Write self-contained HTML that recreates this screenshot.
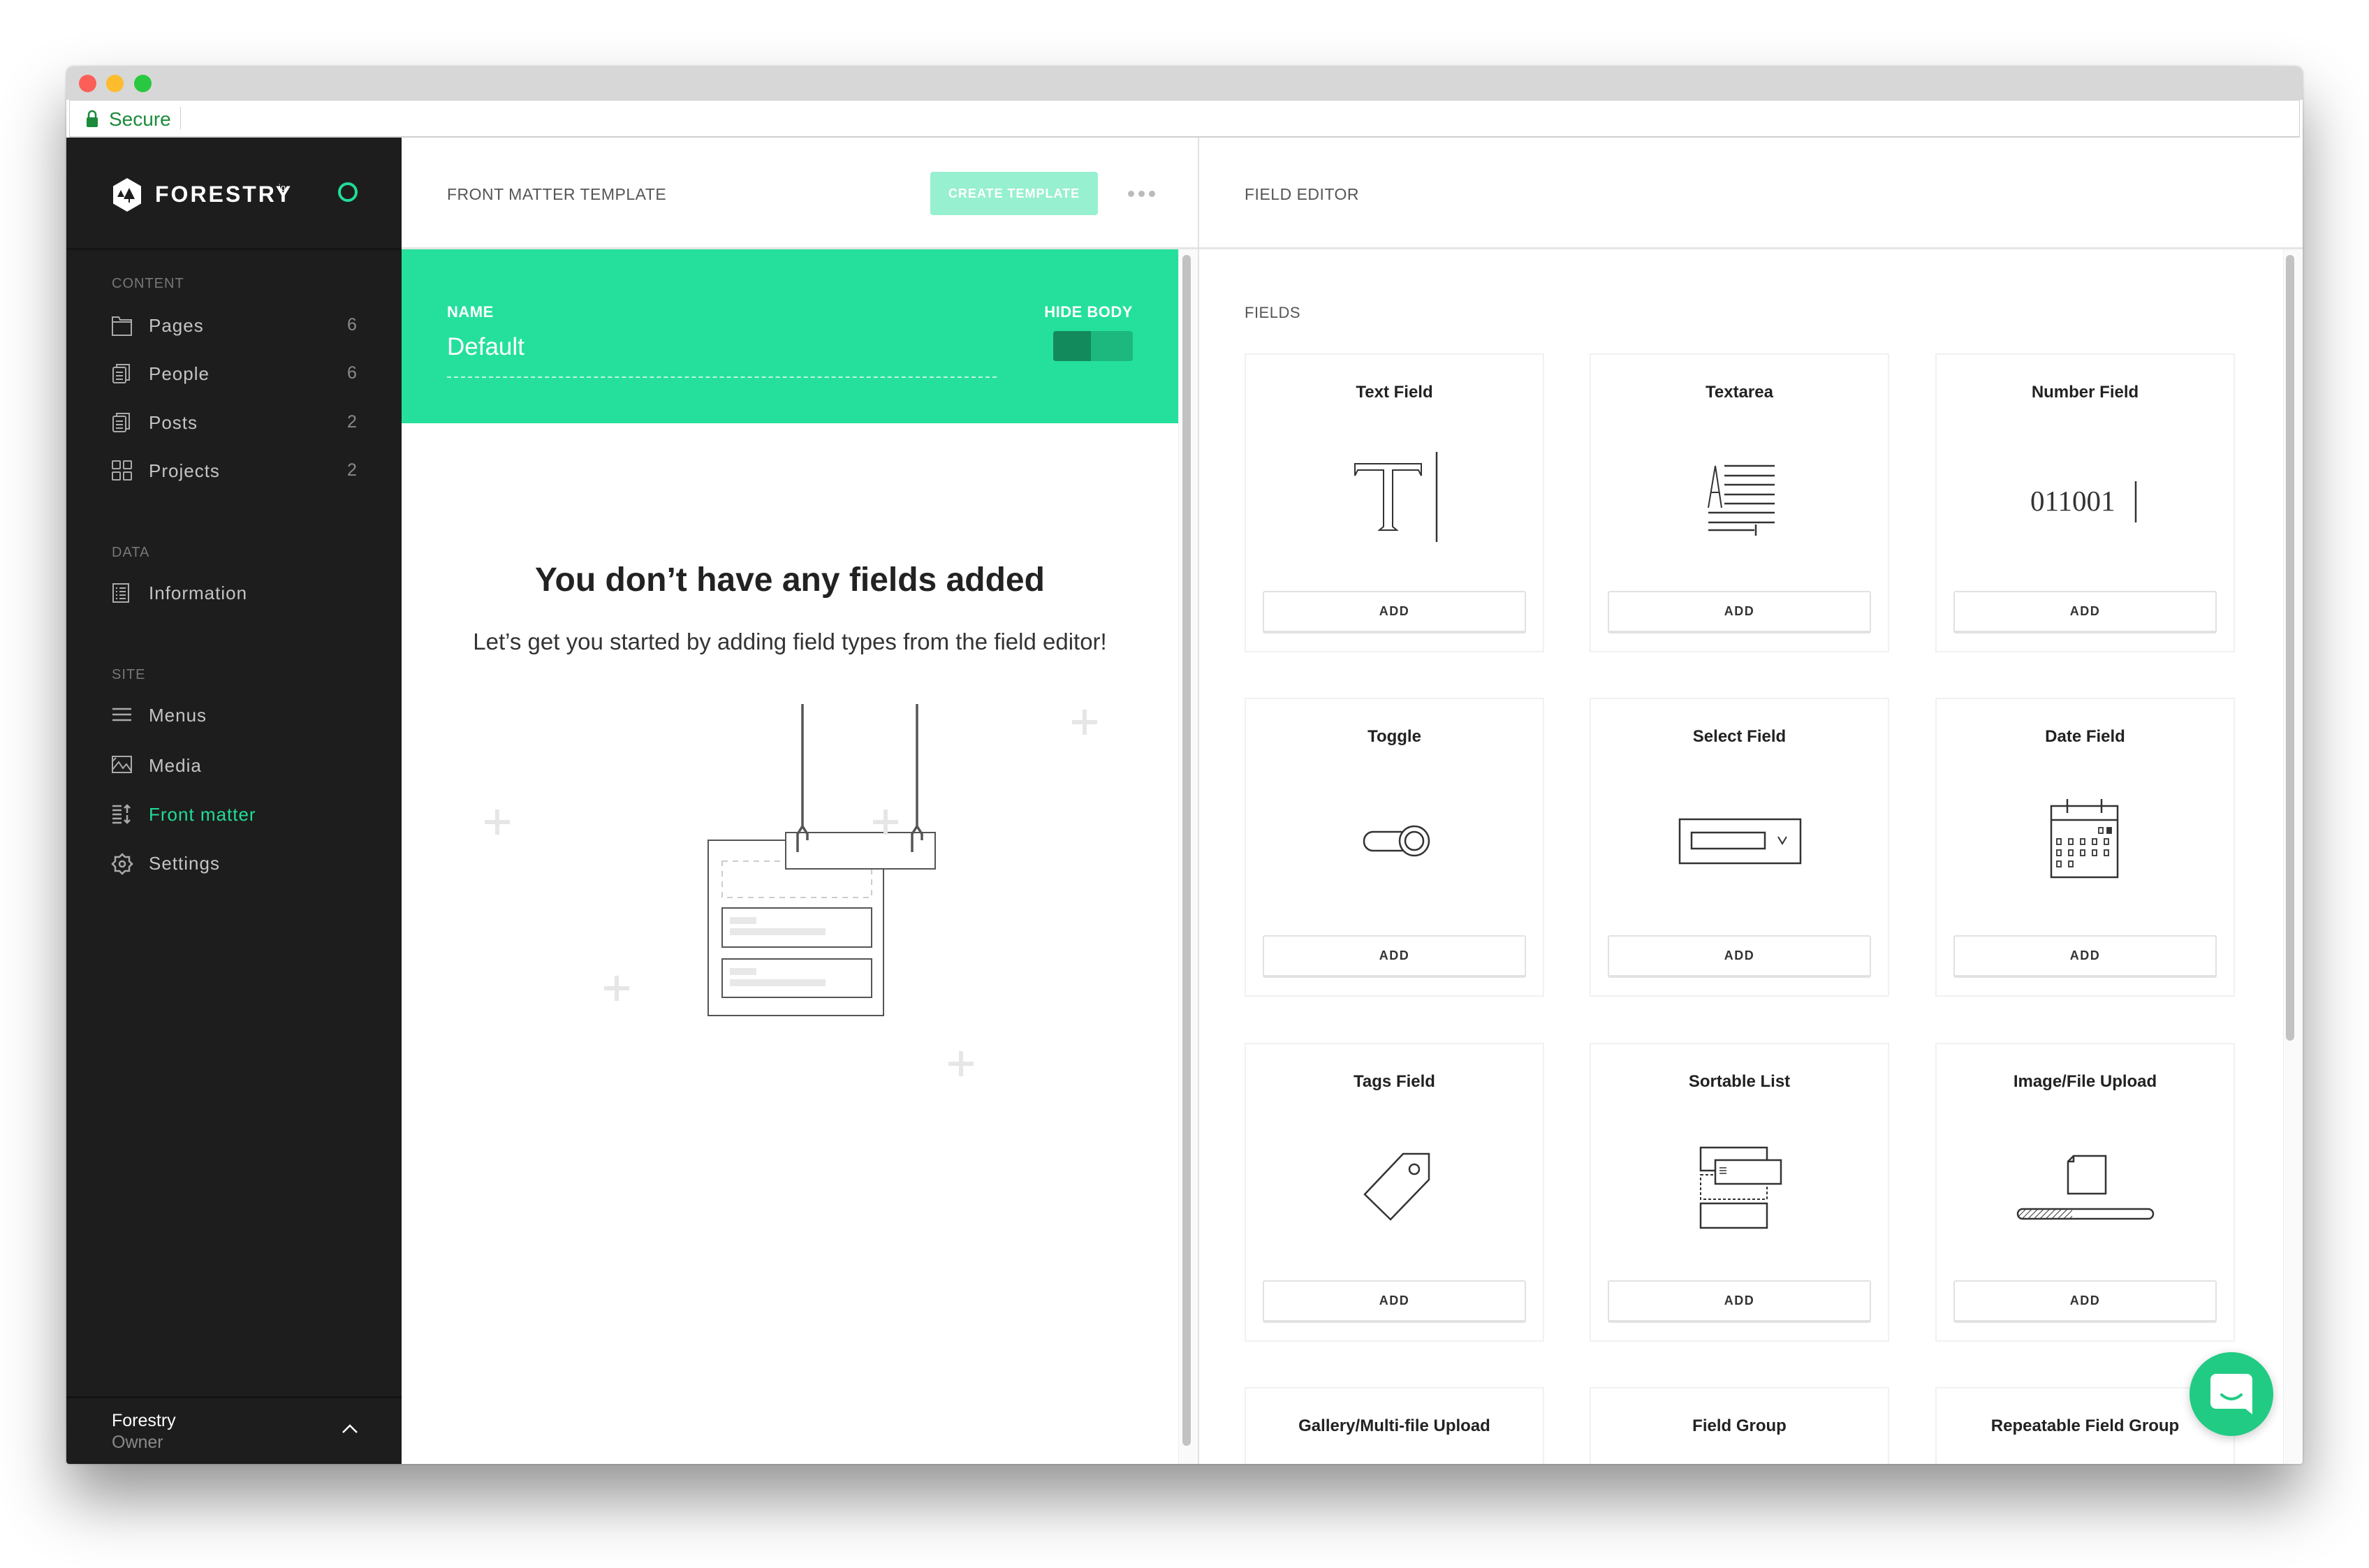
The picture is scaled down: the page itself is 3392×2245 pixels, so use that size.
<!DOCTYPE html>
<html><head><meta charset="utf-8">
<style>
*{margin:0;padding:0;box-sizing:border-box}
html,body{width:3392px;height:2245px;overflow:hidden}
body{background:#fff;position:relative;font-family:"Liberation Sans",sans-serif}
.a{position:absolute}
#win{left:95px;top:95px;width:3202px;height:2001px;background:#fff;box-shadow:0 50px 90px rgba(0,0,0,.42),0 0 3px rgba(0,0,0,.25);border-radius:10px 10px 4px 4px;overflow:hidden}
.side{color:#c4c4c4;font-size:26px;letter-spacing:1px}
.sec{color:#777;font-size:20px;letter-spacing:1px}
.cnt{color:#8a8a8a;font-size:25px}
.card{position:absolute;width:429px;height:428px;border:2px solid #f1f1f1;background:#fff}
.card .t{position:absolute;left:0;right:0;top:40px;text-align:center;font-size:24px;font-weight:bold;color:#222}
.card .b{position:absolute;left:24px;top:338px;width:377px;height:61px;border:2px solid #e2e2e2;border-bottom-width:4px;border-radius:3px;text-align:center;line-height:55px;font-size:18px;font-weight:bold;letter-spacing:1.5px;color:#333}
.card svg{position:absolute;left:84px;top:101px}
.plus{position:absolute;width:36px;height:36px}
.plus:before,.plus:after{content:"";position:absolute;background:#e6e6e6}
.plus:before{left:15px;top:0;width:6px;height:36px}
.plus:after{top:15px;left:0;height:6px;width:36px}
</style></head><body>
<div id="win" class="a">
 <div class="a" style="left:0;top:0;width:3202px;height:48px;background:#d7d7d7"></div>
 <div class="a" style="left:18px;top:12px;width:25px;height:25px;border-radius:50%;background:#fc5f57"></div>
 <div class="a" style="left:57px;top:12px;width:25px;height:25px;border-radius:50%;background:#fdbc2e"></div>
 <div class="a" style="left:97px;top:12px;width:25px;height:25px;border-radius:50%;background:#28c840"></div>
 <div class="a" style="left:4px;top:48px;width:3194px;height:54px;background:#fff;border:1px solid #cfcfcf;border-bottom:2px solid #cfcfcf"></div>
 <svg class="a" style="left:28px;top:62px" width="18" height="26"><path d="M4 11V7a5 5 0 0 1 10 0v4" fill="none" stroke="#1b8a3a" stroke-width="2.5"/><rect x="1" y="11" width="16" height="14" rx="2" fill="#1b8a3a"/></svg>
 <div class="a" style="left:61px;top:60px;font-size:28px;color:#1b8a3a">Secure</div>
 <div class="a" style="left:163px;top:58px;width:1px;height:32px;background:#ccc"></div>

 <div class="a" style="left:0;top:102px;width:480px;height:1899px;background:#1d1d1d"></div>
 <div class="a" style="left:0;top:260px;width:480px;height:3px;background:#151515"></div>
 <svg class="a" style="left:65px;top:159px" width="44" height="50" viewBox="0 0 44 50"><path d="M22 1 L42 12.5 V37.5 L22 49 L2 37.5 V12.5Z" fill="#fff"/><path d="M13 18 L8 28 H18Z M25 15 L17 31 H33Z" fill="#1d1d1d"/><rect x="24" y="30" width="2" height="6" fill="#1d1d1d"/></svg>
 <div class="a" style="left:127px;top:165px;font-size:32px;font-weight:bold;color:#fff;letter-spacing:3px">FORESTRY</div>
 <div class="a" style="left:304px;top:166px;font-size:13px;color:#fff">io</div>
 <div class="a" style="left:389px;top:166px;width:28px;height:28px;border-radius:50%;border:4px solid #22dc97"></div>

 <div class="a sec" style="left:65px;top:300px">CONTENT</div>
 <svg class="a" style="left:65px;top:357px" width="30" height="30" fill="none" stroke="#aaa" stroke-width="2"><path d="M1 2H10L12 6H28V28H1Z M1 9H28"/></svg>
 <div class="a side" style="left:118px;top:356px">Pages</div><div class="a cnt" style="left:402px;top:356px">6</div>
 <svg class="a" style="left:66px;top:425px" width="28" height="30" fill="none" stroke="#aaa" stroke-width="2"><rect x="1" y="6" width="18" height="22" rx="2"/><path d="M6 6V2H24V24H19 M5 13H15M5 18H15M5 23H15"/></svg>
 <div class="a side" style="left:118px;top:425px">People</div><div class="a cnt" style="left:402px;top:425px">6</div>
 <svg class="a" style="left:66px;top:495px" width="28" height="30" fill="none" stroke="#aaa" stroke-width="2"><rect x="1" y="6" width="18" height="22" rx="2"/><path d="M6 6V2H24V24H19 M5 13H15M5 18H15M5 23H15"/></svg>
 <div class="a side" style="left:118px;top:495px">Posts</div><div class="a cnt" style="left:402px;top:495px">2</div>
 <svg class="a" style="left:65px;top:564px" width="30" height="30" fill="none" stroke="#aaa" stroke-width="2"><rect x="1" y="1" width="11" height="11" rx="1"/><rect x="17" y="1" width="11" height="11" rx="1"/><rect x="1" y="17" width="11" height="11" rx="1"/><rect x="17" y="17" width="11" height="11" rx="1"/></svg>
 <div class="a side" style="left:118px;top:564px">Projects</div><div class="a cnt" style="left:402px;top:564px">2</div>

 <div class="a sec" style="left:65px;top:685px">DATA</div>
 <svg class="a" style="left:66px;top:740px" width="28" height="30" fill="none" stroke="#aaa" stroke-width="2"><rect x="1" y="1" width="22" height="26"/><path d="M5 7H7M10 7H19M5 12H7M10 12H19M5 17H7M10 17H19M5 22H7M10 22H19"/></svg>
 <div class="a side" style="left:118px;top:739px">Information</div>

 <div class="a sec" style="left:65px;top:860px">SITE</div>
 <svg class="a" style="left:65px;top:917px" width="30" height="24" stroke="#aaa" stroke-width="2.5"><path d="M1 3H28M1 11H28M1 19H28"/></svg>
 <div class="a side" style="left:118px;top:914px">Menus</div>
 <svg class="a" style="left:65px;top:987px" width="30" height="28" fill="none" stroke="#aaa" stroke-width="2"><rect x="1" y="1" width="27" height="23"/><path d="M1 20L10 9L16 18L21 12L28 22 M1 8L6 3"/></svg>
 <div class="a side" style="left:118px;top:986px">Media</div>
 <svg class="a" style="left:65px;top:1056px" width="30" height="30" fill="none" stroke="#aaa" stroke-width="2.5"><path d="M1 3H14M1 9H14M1 15H14M1 21H14M1 27H14 M22 2V13M18 6L22 2L26 6 M22 16V27M18 23L22 27L26 23"/></svg>
 <div class="a side" style="left:118px;top:1056px;color:#22dc97">Front matter</div>
 <svg class="a" style="left:64px;top:1126px" width="32" height="32" fill="none" stroke="#aaa" stroke-width="2.5"><path d="M16 2L20 6H26V12L30 16L26 20V26H20L16 30L12 26H6V20L2 16L6 12V6H12Z"/><circle cx="16" cy="16" r="4"/></svg>
 <div class="a side" style="left:118px;top:1126px">Settings</div>

 <div class="a" style="left:0;top:1904px;width:480px;height:3px;background:#131313"></div>
 <div class="a" style="left:65px;top:1925px;font-size:25px;color:#fff">Forestry</div>
 <div class="a" style="left:65px;top:1956px;font-size:25px;color:#8a8a8a">Owner</div>
 <svg class="a" style="left:395px;top:1944px" width="22" height="14" fill="none" stroke="#fff" stroke-width="2.5"><path d="M1 12L11 2L21 12"/></svg>

 <div class="a" style="left:480px;top:102px;width:1140px;height:160px;border-bottom:3px solid #e5e5e5"></div>
 <div class="a" style="left:545px;top:170px;font-size:23px;color:#555;letter-spacing:.5px">FRONT MATTER TEMPLATE</div>
 <div class="a" style="left:1237px;top:151px;width:240px;height:62px;background:#97f0cf;border-radius:4px;color:#fff;font-size:18px;font-weight:bold;letter-spacing:1px;text-align:center;line-height:62px">CREATE TEMPLATE</div>
 <div class="a" style="left:1520px;top:178px;width:9px;height:9px;border-radius:50%;background:#bbb;box-shadow:15px 0 #bbb,30px 0 #bbb"></div>
 <div class="a" style="left:1620px;top:102px;width:2px;height:1899px;background:#e2e2e2"></div>
 <div class="a" style="left:480px;top:262px;width:1112px;height:249px;background:#24e09c"></div>
 <div class="a" style="left:545px;top:339px;font-size:22px;font-weight:bold;color:#fff;letter-spacing:.5px">NAME</div>
 <div class="a" style="left:1395px;top:339px;font-size:22px;font-weight:bold;color:#fff;letter-spacing:.5px;width:132px;text-align:right">HIDE BODY</div>
 <div class="a" style="left:545px;top:382px;font-size:35px;color:#fff">Default</div>
 <div class="a" style="left:545px;top:444px;width:787px;border-top:2px dashed rgba(255,255,255,.7)"></div>
 <div class="a" style="left:1413px;top:379px;width:114px;height:43px;border-radius:4px;background:#1cb87e;overflow:hidden"><div style="width:54px;height:43px;background:#138a5c"></div></div>
 <div class="a" style="left:1592px;top:262px;width:28px;height:1739px;background:#fafafa;border-left:1px solid #eee"></div>
 <div class="a" style="left:1598px;top:270px;width:12px;height:1705px;border-radius:6px;background:#c2c2c2"></div>

 <div class="a" style="left:480px;top:708px;width:1112px;text-align:center;font-size:48px;font-weight:bold;color:#222">You don’t have any fields added</div>
 <div class="a" style="left:480px;top:805px;width:1112px;text-align:center;font-size:33px;color:#333">Let’s get you started by adding field types from the field editor!</div>

 <svg class="a" style="left:880px;top:805px" width="400" height="570" fill="none" stroke="#555">
  <rect x="39" y="303" width="251" height="251" stroke-width="2"/>
  <rect x="59" y="333" width="214" height="52" stroke="#ccc" stroke-width="2" stroke-dasharray="8 7"/>
  <rect x="59" y="400" width="214" height="56" stroke-width="2"/>
  <rect x="59" y="473" width="214" height="55" stroke-width="2"/>
  <rect x="70" y="413" width="38" height="10" fill="#e8e8e8" stroke="none"/>
  <rect x="70" y="429" width="137" height="10" fill="#e8e8e8" stroke="none"/>
  <rect x="70" y="486" width="38" height="10" fill="#e8e8e8" stroke="none"/>
  <rect x="70" y="502" width="137" height="10" fill="#e8e8e8" stroke="none"/>
  <rect x="150" y="292" width="214" height="52" fill="#fff" stroke-width="2"/>
  <path d="M174 108V283L167 294V320 M174 283L181 294V303 M338 108V283L331 294V320 M338 283L345 294V303" stroke-width="3.5"/>
 </svg>
 <div class="plus" style="left:1440px;top:921px"></div>
 <div class="plus" style="left:599px;top:1064px"></div>
 <div class="plus" style="left:1155px;top:1064px"></div>
 <div class="plus" style="left:770px;top:1302px"></div>
 <div class="plus" style="left:1263px;top:1410px"></div>

 <div class="a" style="left:1622px;top:102px;width:1580px;height:160px;border-bottom:3px solid #e5e5e5"></div>
 <div class="a" style="left:1687px;top:170px;font-size:23px;color:#555;letter-spacing:.5px">FIELD EDITOR</div>
 <div class="a" style="left:1687px;top:340px;font-size:22px;color:#555;letter-spacing:.5px">FIELDS</div>
 <div class="a" style="left:3174px;top:262px;width:28px;height:1739px;background:#fafafa;border-left:1px solid #eee"></div>
 <div class="a" style="left:3178px;top:270px;width:12px;height:1125px;border-radius:6px;background:#c2c2c2"></div>

 <div class="card" style="left:1687px;top:411px"><div class="t">Text Field</div>
  <svg width="260" height="200" fill="#fff" stroke="#333" stroke-width="2"><path d="M72 55H167V72L163 64H126V145L132 150H107L113 145V64H76L72 72Z"/><path d="M189 38V167" stroke-width="2.5"/></svg>
  <div class="b">ADD</div></div>
 <div class="card" style="left:2181px;top:411px"><div class="t">Textarea</div>
  <svg width="260" height="200" fill="none" stroke="#333" stroke-width="2"><path d="M84 118L94 58L103 118 M88 96H100"/><path d="M107 58H179M107 72H179M107 85H179M107 99H179M107 112H179M84 125H179M84 139H179M84 150H150M152 142V158" stroke-width="2.5"/></svg>
  <div class="b">ADD</div></div>
 <div class="card" style="left:2676px;top:411px"><div class="t">Number Field</div>
  <svg width="260" height="200"><text x="50" y="122" font-family="Liberation Serif,serif" font-size="41" fill="#333">011001</text><path d="M201 80V139" stroke="#333" stroke-width="2.5"/></svg>
  <div class="b">ADD</div></div>
 <div class="card" style="left:1687px;top:904px"><div class="t">Toggle</div>
  <svg width="260" height="200" fill="#fff" stroke="#333" stroke-width="2.5"><rect x="85" y="89" width="66" height="27" rx="13"/><circle cx="157" cy="102" r="21"/><circle cx="157" cy="102" r="13"/></svg>
  <div class="b">ADD</div></div>
 <div class="card" style="left:2181px;top:904px"><div class="t">Select Field</div>
  <svg width="260" height="200" fill="none" stroke="#333" stroke-width="2.5"><rect x="43" y="71" width="173" height="63"/><rect x="60" y="90" width="105" height="23"/><path d="M184 96L190 106L196 96" stroke-width="2"/></svg>
  <div class="b">ADD</div></div>
 <div class="card" style="left:2676px;top:904px"><div class="t">Date Field</div>
  <svg width="260" height="200" fill="none" stroke="#333" stroke-width="2.5"><rect x="80" y="52" width="95" height="102"/><path d="M80 72H175M103 42V62M152 42V62" /><g stroke-width="1.8"><rect x="148" y="83" width="6" height="8"/><rect x="160" y="83" width="6" height="8" fill="#333"/><rect x="88" y="99" width="6" height="8"/><rect x="105" y="99" width="6" height="8"/><rect x="122" y="99" width="6" height="8"/><rect x="139" y="99" width="6" height="8"/><rect x="156" y="99" width="6" height="8"/><rect x="88" y="115" width="6" height="8"/><rect x="105" y="115" width="6" height="8"/><rect x="122" y="115" width="6" height="8"/><rect x="139" y="115" width="6" height="8"/><rect x="156" y="115" width="6" height="8"/><rect x="88" y="131" width="6" height="8"/><rect x="105" y="131" width="6" height="8"/></g></svg>
  <div class="b">ADD</div></div>
 <div class="card" style="left:1687px;top:1398px"><div class="t">Tags Field</div>
  <svg width="260" height="200" fill="none" stroke="#333" stroke-width="2.5"><path d="M141 56H178V93L123 150L86 114Z"/><circle cx="157" cy="78" r="7"/></svg>
  <div class="b">ADD</div></div>
 <div class="card" style="left:2181px;top:1398px"><div class="t">Sortable List</div>
  <svg width="260" height="200" fill="#fff" stroke="#333" stroke-width="2.5"><rect x="73" y="47" width="95" height="33"/><rect x="73" y="86" width="95" height="35" stroke-dasharray="4 3" stroke-width="2"/><rect x="94" y="65" width="94" height="34"/><path d="M100 76H110M100 80H110M100 84H110" stroke-width="1.5"/><rect x="73" y="127" width="95" height="35"/></svg>
  <div class="b">ADD</div></div>
 <div class="card" style="left:2676px;top:1398px"><div class="t">Image/File Upload</div>
  <svg width="260" height="200" fill="none" stroke="#333" stroke-width="2.5"><path d="M112 59H158V113H104V67Z M104 67H112V59"/><defs><pattern id="h" width="6" height="6" patternUnits="userSpaceOnUse" patternTransform="rotate(45)"><path d="M0 0V6" stroke="#333" stroke-width="2"/></pattern></defs><path d="M39 135H110V149H39A7 7 0 0 1 39 135Z" fill="url(#h)" stroke="none"/><rect x="32" y="135" width="194" height="14" rx="7"/></svg>
  <div class="b">ADD</div></div>
 <div class="card" style="left:1687px;top:1891px"><div class="t">Gallery/Multi-file Upload</div></div>
 <div class="card" style="left:2181px;top:1891px"><div class="t">Field Group</div></div>
 <div class="card" style="left:2676px;top:1891px"><div class="t">Repeatable Field Group</div></div>

 <div class="a" style="left:3040px;top:1841px;width:120px;height:120px;border-radius:50%;background:#21cb83;box-shadow:0 4px 14px rgba(0,0,0,.2)"></div>
 <svg class="a" style="left:3068px;top:1870px" width="64" height="62"><path d="M10 2H54A8 8 0 0 1 62 10V60L52 52H10A8 8 0 0 1 2 44V10A8 8 0 0 1 10 2Z" fill="#fff"/><path d="M18 32Q32 44 46 32" fill="none" stroke="#21cb83" stroke-width="4" stroke-linecap="round"/></svg>
</div>
</body></html>
